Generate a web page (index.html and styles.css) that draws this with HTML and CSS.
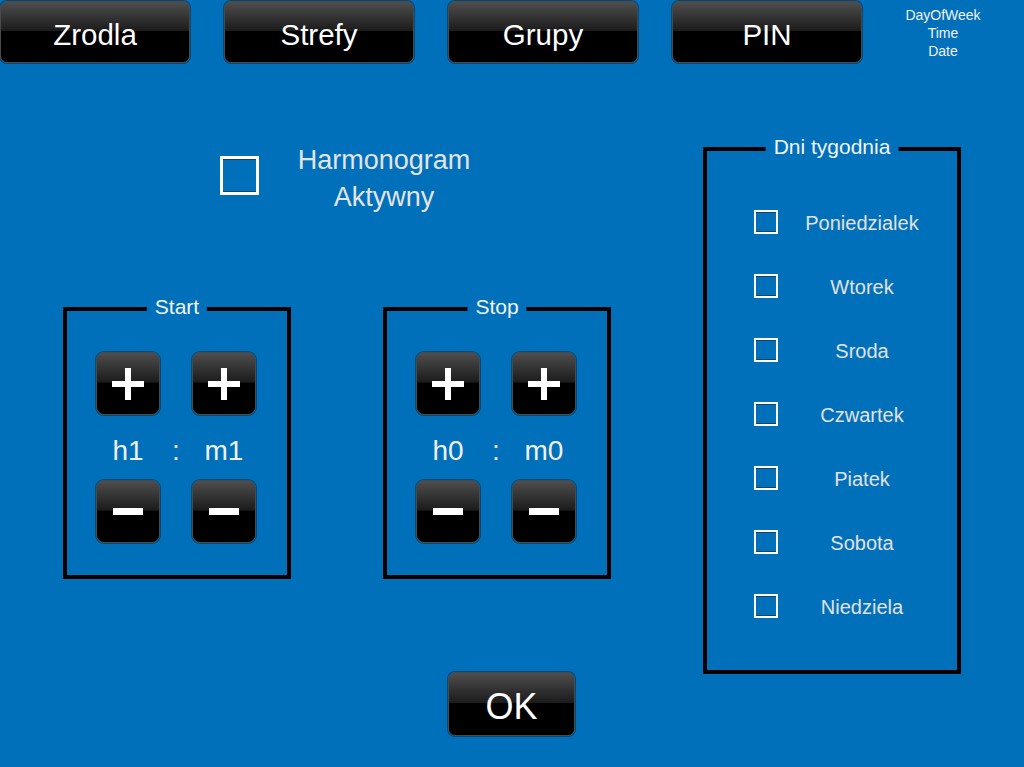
FILE: index.html
```html
<!DOCTYPE html>
<html>
<head>
<meta charset="utf-8">
<link rel="stylesheet" href="styles.css">
</head>
<body>
<div class="screen">
  <header class="topbar">
    <button class="btn nav-btn">Zrodla</button>
    <button class="btn nav-btn">Strefy</button>
    <button class="btn nav-btn">Grupy</button>
    <button class="btn nav-btn">PIN</button>
    <div class="clock">
      <div>DayOfWeek</div>
      <div>Time</div>
      <div>Date</div>
    </div>
  </header>
  <main class="main">
    <section class="left">
      <div class="active-row">
        <span class="check big"></span>
        <div class="active-label">Harmonogram<br>Aktywny</div>
      </div>
      <div class="boxes">
        <div class="group time-box">
          <span class="legend">Start</span>
          <div class="time-grid">
            <button class="btn sq"><svg width="32" height="32" viewBox="0 0 32 32"><rect x="0" y="13" width="32" height="6" fill="#fff"/><rect x="13" y="0" width="6" height="32" fill="#fff"/></svg></button>
            <span></span>
            <button class="btn sq"><svg width="32" height="32" viewBox="0 0 32 32"><rect x="0" y="13" width="32" height="6" fill="#fff"/><rect x="13" y="0" width="6" height="32" fill="#fff"/></svg></button>
            <span class="val">h1</span>
            <span class="val">:</span>
            <span class="val">m1</span>
            <button class="btn sq"><svg width="30" height="8" viewBox="0 0 30 8"><rect x="0" y="0" width="30" height="7" fill="#fff"/></svg></button>
            <span></span>
            <button class="btn sq"><svg width="30" height="8" viewBox="0 0 30 8"><rect x="0" y="0" width="30" height="7" fill="#fff"/></svg></button>
          </div>
        </div>
        <div class="group time-box">
          <span class="legend">Stop</span>
          <div class="time-grid">
            <button class="btn sq"><svg width="32" height="32" viewBox="0 0 32 32"><rect x="0" y="13" width="32" height="6" fill="#fff"/><rect x="13" y="0" width="6" height="32" fill="#fff"/></svg></button>
            <span></span>
            <button class="btn sq"><svg width="32" height="32" viewBox="0 0 32 32"><rect x="0" y="13" width="32" height="6" fill="#fff"/><rect x="13" y="0" width="6" height="32" fill="#fff"/></svg></button>
            <span class="val">h0</span>
            <span class="val">:</span>
            <span class="val">m0</span>
            <button class="btn sq"><svg width="30" height="8" viewBox="0 0 30 8"><rect x="0" y="0" width="30" height="7" fill="#fff"/></svg></button>
            <span></span>
            <button class="btn sq"><svg width="30" height="8" viewBox="0 0 30 8"><rect x="0" y="0" width="30" height="7" fill="#fff"/></svg></button>
          </div>
        </div>
      </div>
      <button class="btn ok-btn">OK</button>
    </section>
    <section class="group days-box">
      <span class="legend">Dni tygodnia</span>
      <ul class="days">
        <li><span class="check"></span><span class="day">Poniedzialek</span></li>
        <li><span class="check"></span><span class="day">Wtorek</span></li>
        <li><span class="check"></span><span class="day">Sroda</span></li>
        <li><span class="check"></span><span class="day">Czwartek</span></li>
        <li><span class="check"></span><span class="day">Piatek</span></li>
        <li><span class="check"></span><span class="day">Sobota</span></li>
        <li><span class="check"></span><span class="day">Niedziela</span></li>
      </ul>
    </section>
  </main>
</div>
</body>
</html>
```

FILE: styles.css
```css
html, body {
  margin: 0;
  padding: 0;
}
body {
  background: #0070bb;
  font-family: "Liberation Sans", Arial, sans-serif;
  color: #fff;
}
.screen {
  width: 1024px;
  height: 767px;
  overflow: hidden;
  background: #0070bb;
}
.topbar {
  display: flex;
  gap: 34px;
  padding-top: 1px;
  height: 62px;
}
.btn {
  box-sizing: border-box;
  border: 1px solid #4a4a4a;
  border-radius: 7px;
  background: linear-gradient(to bottom, #4e4e4e 0%, #333 25%, #1c1c1c 48%, #000 49%, #000 100%);
  color: #fff;
  font-family: "Liberation Sans", Arial, sans-serif;
  display: flex;
  align-items: center;
  justify-content: center;
  padding: 0;
  box-shadow: 0 0 0 1px rgba(0, 0, 0, 0.35);
}
.nav-btn {
  width: 190px;
  height: 62px;
  font-size: 29.5px;
  padding-top: 5px;
}
.clock {
  flex: 1;
  margin-left: -34px;
  text-align: center;
  font-size: 14px;
  line-height: 18px;
  padding-top: 5px;
  color: #f2f2f2;
}
.main {
  display: flex;
}
.left {
  width: 703px;
  display: flex;
  flex-direction: column;
}
.active-row {
  display: flex;
  align-items: flex-start;
  margin-top: 79px;
  padding-left: 220px;
}
.check {
  box-sizing: border-box;
  display: block;
  width: 24px;
  height: 24px;
  border: 2px solid #fff;
  box-shadow: inset 0 1px 0 #17406a, inset 0 -1px 0 #17406a;
}
.check.big {
  width: 39px;
  height: 39px;
  border-width: 3px;
  margin-top: 14px;
}
.active-label {
  width: 190px;
  margin-left: 30px;
  text-align: center;
  font-size: 27px;
  line-height: 37px;
  color: #e4e4e4;
}
.boxes {
  display: flex;
  gap: 92px;
  margin-top: 91px;
  padding-left: 63px;
}
.group {
  position: relative;
  box-sizing: border-box;
  border: 4px solid #000;
}
.legend {
  position: absolute;
  top: -16px;
  left: 50%;
  transform: translateX(-50%);
  padding: 0 8px;
  background: #0070bb;
  font-size: 21px;
  line-height: 24px;
  white-space: nowrap;
  color: #f4f4f4;
}
.time-box {
  width: 228px;
  height: 272px;
  padding: 41px 0 0 29px;
}
.time-grid {
  display: grid;
  grid-template-columns: 64px 32px 64px;
  grid-template-rows: 63px 65px 63px;
}
.sq {
  width: 64px;
  height: 63px;
  border-radius: 8px;
}
.val {
  display: flex;
  align-items: center;
  justify-content: center;
  font-size: 28px;
  padding-top: 6px;
  color: #f0f0f0;
}
.ok-btn {
  width: 127px;
  height: 64px;
  margin-top: 93px;
  margin-left: 448px;
  font-size: 36px;
  padding-top: 5px;
}
.days-box {
  width: 258px;
  height: 527px;
  margin-top: 84px;
}
.days {
  list-style: none;
  margin: 0;
  padding: 39px 11px 0 47px;
}
.days li {
  display: grid;
  grid-template-columns: 24px 1fr;
  align-items: center;
  height: 64px;
}
.day {
  text-align: center;
  font-size: 20px;
  padding-top: 2px;
  color: #e2e2e2;
}
```
